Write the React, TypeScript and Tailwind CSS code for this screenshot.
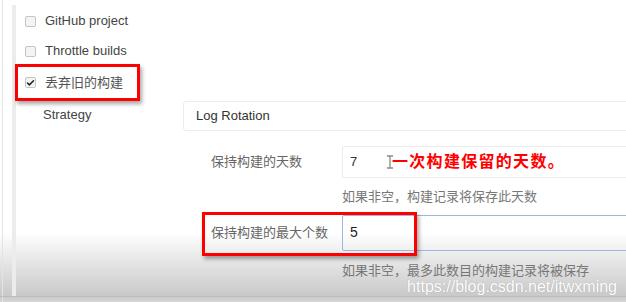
import { Check } from "lucide-react";

const font = "font-['Liberation_Sans','Noto_Sans_CJK_SC',sans-serif]";

function Box({ checked = false }: { checked?: boolean }) {
  return (
    <span className="flex h-[11px] w-[11px] shrink-0 items-center justify-center rounded-[2px] border border-[#c4c4c4] bg-[#f4f4f4]">
      {checked && <Check size={10} strokeWidth={4} className="text-[#222]" />}
    </span>
  );
}

function IBeam() {
  return (
    <svg width="8" height="14" viewBox="0 0 8 14" className="shrink-0">
      <path d="M1 1h6M4 1v12M1 13h6" stroke="#8a8a8a" strokeWidth="1.3" fill="none" />
    </svg>
  );
}

export default function App() {
  return (
    <div
      className={`relative flex h-[302px] w-[626px] overflow-hidden bg-[linear-gradient(180deg,#ffffff_0%,#ffffff_77%,#e2e2e2_88%,#c9c9c9_98%,#d6d6d6_100%)] text-[13px] text-[#444] ${font}`}
    >
      {/* left frame rules */}
      <div className="ml-[2px] w-px shrink-0 bg-[#e3e3e3]" />
      <div className="mb-[6px] ml-[9px] mt-[5px] w-[4px] shrink-0 bg-[#ececec]" />

      <div className="flex min-w-0 flex-1 flex-col pt-[6px]">
        <label className="flex h-[30px] items-center gap-[9px] pl-[9px]">
          <Box />
          <span>GitHub project</span>
        </label>
        <label className="flex h-[30px] items-center gap-[9px] pl-[9px]">
          <Box />
          <span>Throttle builds</span>
        </label>

        {/* annotated checkbox */}
        <div className="-ml-px -mt-[2px] flex h-[37px] w-[125px] items-center gap-[9px] border-[3px] border-[#ff0000] pl-[7px] shadow-[2px_3px_4px_rgba(0,0,0,0.35)]">
          <Box checked />
          <span className="text-[#555]">丢弃旧的构建</span>
        </div>

        <div className="flex items-center">
          <span className="w-[167px] shrink-0 pb-[2px] pl-[27px]">Strategy</span>
          <div className="-mr-[4px] flex h-[30px] flex-1 items-center rounded-[3px] border border-[#ececec] pl-[12px] text-[#333]">
            Log Rotation
          </div>
        </div>

        {/* days to keep */}
        <div className="mt-[15px] flex items-center">
          <span className="w-[195px] shrink-0" />
          <span className="w-[131px] shrink-0 text-[#666]">保持构建的天数</span>
          <div className="-mr-[4px] flex h-[32px] flex-1 items-center rounded-[2px] border border-[#ececec] pl-[7px] text-[#333]">
            <span className="w-[36px]">7</span>
            <IBeam />
            <span className="-ml-[2px] text-[16px] font-bold tracking-[1.3px] text-[#ff0000]">一次构建保留的天数。</span>
          </div>
        </div>
        <div className="mt-[9px] pl-[326px] text-[#777]">如果非空，构建记录将保存此天数</div>

        {/* builds to keep */}
        <div className="relative mt-[8px] flex items-center">
          <span className="w-[195px] shrink-0" />
          <span className="w-[131px] shrink-0 text-[#666]">保持构建的最大个数</span>
          <div className="-mr-[4px] flex h-[36px] flex-1 items-center rounded-[2px] border border-[#9fb7e0] pl-[7px] text-[14px] text-[#222]">
            5
          </div>
          <div className="pointer-events-none absolute left-[186px] top-[-3px] h-[44px] w-[215px] border-[3px] border-[#ff0000] shadow-[2px_3px_4px_rgba(0,0,0,0.35)]" />
        </div>
        <div className="mt-[10px] pl-[326px] text-[#777]">如果非空，最多此数目的构建记录将被保存</div>
      </div>

      {/* bottom frame rule */}
      <div className="absolute bottom-[5px] left-0 right-0 h-px bg-[#b9bdbb]" />

      {/* watermark */}
      <div className="absolute bottom-[6px] right-[9px] font-['Liberation_Sans',sans-serif] text-[16px] leading-[18px] text-white [text-shadow:0_0_1px_rgba(0,0,0,0.25)]">
        https://blog.csdn.net/itwxming
      </div>
    </div>
  );
}
